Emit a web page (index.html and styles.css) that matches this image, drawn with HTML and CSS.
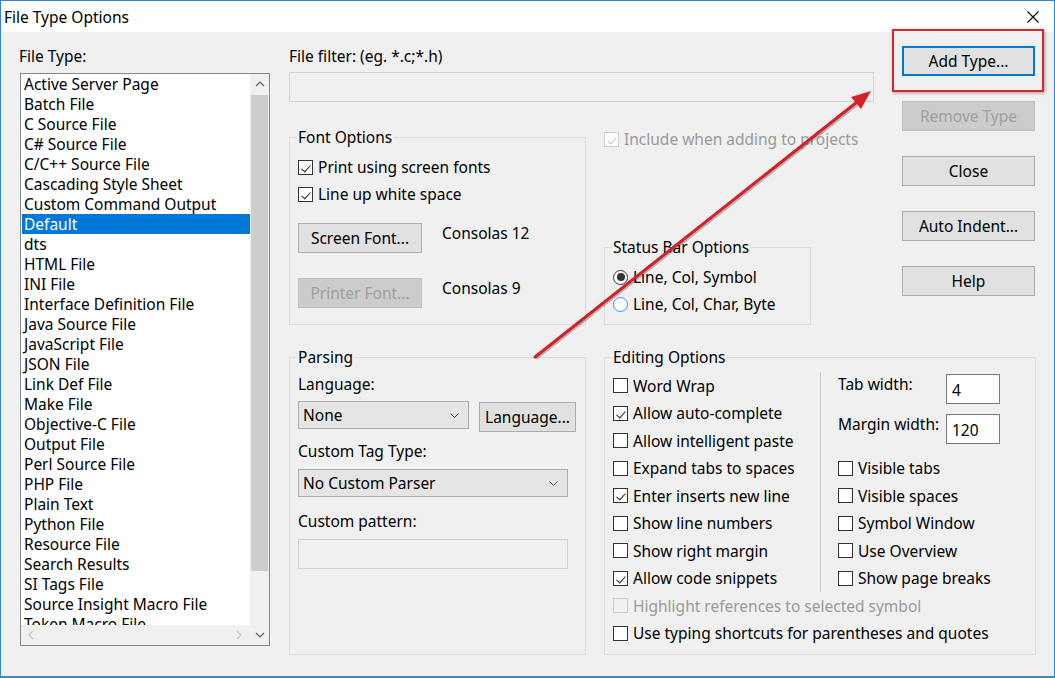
FILE: index.html
```html
<!DOCTYPE html>
<html>
<head>
<meta charset="utf-8">
<link rel="stylesheet" href="styles.css">
</head>
<body>
<div class="window">
  <div class="titlebar">
    <span class="title">File Type Options</span>
    <svg class="close-x" width="12" height="12" viewBox="0 0 12 12"><path d="M0.5 0.5L11.5 11.5M11.5 0.5L0.5 11.5" stroke="#000" stroke-width="1.1" fill="none"/></svg>
  </div>
  <div class="content">
    <div class="col-list">
      <div class="label">File Type:</div>
      <div class="listbox">
        <div class="items">
          <div class="item">Active Server Page</div>
          <div class="item">Batch File</div>
          <div class="item">C Source File</div>
          <div class="item">C# Source File</div>
          <div class="item">C/C++ Source File</div>
          <div class="item">Cascading Style Sheet</div>
          <div class="item">Custom Command Output</div>
          <div class="item selected">Default</div>
          <div class="item">dts</div>
          <div class="item">HTML File</div>
          <div class="item">INI File</div>
          <div class="item">Interface Definition File</div>
          <div class="item">Java Source File</div>
          <div class="item">JavaScript File</div>
          <div class="item">JSON File</div>
          <div class="item">Link Def File</div>
          <div class="item">Make File</div>
          <div class="item">Objective-C File</div>
          <div class="item">Output File</div>
          <div class="item">Perl Source File</div>
          <div class="item">PHP File</div>
          <div class="item">Plain Text</div>
          <div class="item">Python File</div>
          <div class="item">Resource File</div>
          <div class="item">Search Results</div>
          <div class="item">SI Tags File</div>
          <div class="item">Source Insight Macro File</div>
          <div class="item">Token Macro File</div>
        </div>
        <div class="vscroll">
          <div class="sb-btn">
            <svg width="10" height="6" viewBox="0 0 10 6"><path d="M1 5L5 1L9 5" stroke="#606060" stroke-width="1.2" fill="none"/></svg>
          </div>
          <div class="thumb"></div>
        </div>
        <div class="hscroll">
          <svg width="6" height="10" viewBox="0 0 6 10"><path d="M5 1L1 5L5 9" stroke="#c2c2c2" stroke-width="1.2" fill="none"/></svg>
          <svg width="6" height="10" viewBox="0 0 6 10"><path d="M1 1L5 5L1 9" stroke="#c2c2c2" stroke-width="1.2" fill="none"/></svg>
        </div>
        <div class="corner">
          <svg width="10" height="6" viewBox="0 0 10 6"><path d="M1 1L5 5L9 1" stroke="#606060" stroke-width="1.2" fill="none"/></svg>
        </div>
      </div>
    </div>

    <div class="main">
      <div class="top">
        <div class="top-left">
          <div class="label">File filter: (eg. *.c;*.h)</div>
          <div class="input filter"></div>
          <div class="top-groups">
            <fieldset class="group font-group">
              <legend>Font Options</legend>
              <div class="check-row"><span class="cb checked"></span>Print using screen fonts</div>
              <div class="check-row gap7"><span class="cb checked"></span>Line up white space</div>
              <div class="font-row first">
                <div class="btn font-btn">Screen Font...</div>
                <span class="font-name">Consolas 12</span>
              </div>
              <div class="font-row">
                <div class="btn font-btn disabled">Printer Font...</div>
                <span class="font-name">Consolas 9</span>
              </div>
            </fieldset>
            <div class="col3">
              <div class="check-row include disabled-text"><span class="cb checked disabled"></span>Include when adding to projects</div>
              <fieldset class="group status-group">
                <legend>Status Bar Options</legend>
                <div class="check-row"><span class="rb on"></span>Line, Col, Symbol</div>
                <div class="check-row gap7"><span class="rb focus"></span>Line, Col, Char, Byte</div>
              </fieldset>
            </div>
          </div>
        </div>
        <div class="buttons">
          <div class="btn default">Add Type...</div>
          <div class="btn disabled">Remove Type</div>
          <div class="btn">Close</div>
          <div class="btn">Auto Indent...</div>
          <div class="btn">Help</div>
        </div>
      </div>

      <div class="bottom">
        <fieldset class="group parsing-group">
          <legend>Parsing</legend>
          <div class="label">Language:</div>
          <div class="lang-row">
            <div class="combo lang-combo">None<svg width="9" height="5" viewBox="0 0 9 5"><path d="M0.5 0.5L4.5 4.5L8.5 0.5" stroke="#555" stroke-width="1" fill="none"/></svg></div>
            <div class="btn lang-btn">Language...</div>
          </div>
          <div class="label tag-label">Custom Tag Type:</div>
          <div class="combo wide-combo">No Custom Parser<svg width="9" height="5" viewBox="0 0 9 5"><path d="M0.5 0.5L4.5 4.5L8.5 0.5" stroke="#555" stroke-width="1" fill="none"/></svg></div>
          <div class="label pattern-label">Custom pattern:</div>
          <div class="input pattern"></div>
        </fieldset>

        <fieldset class="group editing-group">
          <legend>Editing Options</legend>
          <div class="edit-grid">
            <div class="erow r1 c1"><span class="cb"></span>Word Wrap</div>
            <div class="erow r2 c1"><span class="cb checked"></span>Allow auto-complete</div>
            <div class="erow r3 c1"><span class="cb"></span>Allow intelligent paste</div>
            <div class="erow r4 c1"><span class="cb"></span>Expand tabs to spaces</div>
            <div class="erow r5 c1"><span class="cb checked"></span>Enter inserts new line</div>
            <div class="erow r6 c1"><span class="cb"></span>Show line numbers</div>
            <div class="erow r7 c1"><span class="cb"></span>Show right margin</div>
            <div class="erow r8 c1"><span class="cb checked"></span>Allow code snippets</div>
            <div class="separator"></div>
            <div class="widths">
              <div class="width-row"><span class="width-label">Tab width:</span><div class="num-input">4</div></div>
              <div class="width-row second"><span class="width-label">Margin width:</span><div class="num-input">120</div></div>
            </div>
            <div class="erow r4 c3"><span class="cb"></span>Visible tabs</div>
            <div class="erow r5 c3"><span class="cb"></span>Visible spaces</div>
            <div class="erow r6 c3"><span class="cb"></span>Symbol Window</div>
            <div class="erow r7 c3"><span class="cb"></span>Use Overview</div>
            <div class="erow r8 c3"><span class="cb"></span>Show page breaks</div>
          </div>
          <div class="erow disabled-text"><span class="cb disabled"></span>Highlight references to selected symbol</div>
          <div class="erow"><span class="cb"></span>Use typing shortcuts for parentheses and quotes</div>
        </fieldset>
      </div>
    </div>
  </div>

  <div class="highlight-box"></div>
  <svg class="arrow" width="1055" height="678" viewBox="0 0 1055 678">
    <g transform="translate(1,1.5)" opacity="0.25">
      <line x1="535" y1="357" x2="856" y2="103" stroke="#000" stroke-width="3"/>
    </g>
    <line x1="535" y1="357" x2="857" y2="102" stroke="#d42029" stroke-width="3" stroke-linecap="round"/>
    <polygon points="871,91 861,109 851,97" fill="#d42029"/>
  </svg>
</div>
</body>
</html>
```

FILE: styles.css
```css
* { box-sizing: border-box; }

body {
  margin: 0;
  font-family: "Noto Sans", "Open Sans", sans-serif;
  font-size: 15.5px;
  color: #000;
  background: #f0f0f0;
}

.window {
  position: relative;
  width: 1055px;
  height: 678px;
  background: #f0f0f0;
  border: 1px solid #2e86cf;
  border-bottom: 2px solid #3a8fb5;
  overflow: hidden;
  display: flex;
  flex-direction: column;
}

.titlebar {
  height: 31px;
  flex: none;
  background: #fff;
  display: flex;
  align-items: center;
  justify-content: space-between;
  padding: 0 15px 0 3px;
}

.title { line-height: 20px; }

.content {
  display: flex;
  padding: 14px 0 0 19px;
}

.label { line-height: 20px; height: 20px; white-space: nowrap; }

/* ---------- list ---------- */
.col-list { width: 250px; flex: none; }
.col-list .label { margin-left: -1px; margin-bottom: 7px; }

.listbox {
  width: 250px;
  height: 573px;
  border: 1px solid #828790;
  background: #fff;
  display: grid;
  grid-template-columns: 1fr 19px;
  grid-template-rows: 1fr 20px;
  overflow: hidden;
}

.items { overflow: hidden; }
.item {
  height: 20px;
  line-height: 20px;
  padding-left: 3px;
  white-space: nowrap;
}
.item.selected { background: #0078d7; color: #fff; margin-left: 1px; padding-left: 2px; }

.vscroll {
  background: #f0f0f0;
  display: flex;
  flex-direction: column;
}
.sb-btn {
  height: 20px;
  flex: none;
  display: flex;
  align-items: center;
  justify-content: center;
}
.thumb {
  margin: 1px 1px 0 1px;
  height: 476px;
  background: #cdcdcd;
}

.hscroll {
  background: #f0f0f0;
  display: flex;
  align-items: center;
  justify-content: space-between;
  padding: 0 8px 0 7px;
}
.corner {
  background: #f0f0f0;
  display: flex;
  align-items: center;
  justify-content: center;
}

/* ---------- main ---------- */
.main { margin-left: 19px; display: flex; flex-direction: column; }

.top { display: flex; }
.top-left { width: 585px; display: flex; flex-direction: column; }

.input {
  border: 1px solid #d2d2d2;
  background: #f0f0f0;
}
.filter { margin-top: 6px; height: 30px; }

.top-groups { margin-top: 25px; display: flex; }

.group {
  margin: 0;
  border: 1px solid #dcdcdc;
  min-width: 0;
}
.group legend {
  padding: 0 1px;
  margin-left: -1px;
  line-height: 20px;
  height: 20px;
}

.font-group {
  width: 297px;
  padding: 10px 8px 16px 8px;
}

.check-row {
  display: flex;
  align-items: center;
  height: 20px;
  white-space: nowrap;
}
.gap7 { margin-top: 7px; }

.cb {
  width: 15px;
  height: 15px;
  flex: none;
  border: 1px solid #333;
  background: #fff;
  margin-right: 5px;
  position: relative;
}
.cb.checked::after {
  content: "";
  position: absolute;
  left: 2px;
  top: 1px;
  width: 8px;
  height: 4px;
  border-left: 1px solid #222;
  border-bottom: 1px solid #222;
  transform: translate(0.5px, 3px) rotate(-48deg);
  transform-origin: 50% 50%;
}
.cb.disabled { border-color: #cccccc; background: #f0f0f0; }
.cb.checked.disabled { background: #fff; }
.cb.checked.disabled::after { border-color: #c4c4c4; }

.disabled-text { color: #9a9a9a; }

.rb {
  width: 15px;
  height: 15px;
  flex: none;
  border-radius: 50%;
  border: 1px solid #333;
  background: #fff;
  margin-right: 5px;
  position: relative;
}
.rb.on::after {
  content: "";
  position: absolute;
  left: 2.5px;
  top: 2.5px;
  width: 8px;
  height: 8px;
  border-radius: 50%;
  background: #333;
}
.rb.focus { border-color: #3c92d8; }

.font-row { display: flex; align-items: flex-start; margin-top: 25px; }
.font-row.first { margin-top: 19px; }
.font-name { line-height: 20px; margin-left: 20px; white-space: nowrap; }

.btn {
  height: 30px;
  border: 1px solid #adadad;
  background: #e1e1e1;
  display: flex;
  align-items: center;
  justify-content: center;
  white-space: nowrap;
  line-height: 20px;
}
.btn.disabled { background: #cccccc; border-color: #bfbfbf; color: #a0a0a0; }
.btn.default { border: 2px solid #0078d7; }
.font-btn { width: 124px; }

.col3 { margin-left: 18px; width: 270px; display: flex; flex-direction: column; }
.include { margin-top: 2px; }
.status-group {
  margin-top: 88px;
  width: 207px;
  padding: 10px 8px 10px 8px;
}

.buttons {
  margin-left: 28px;
  width: 133px;
  display: flex;
  flex-direction: column;
  gap: 25px;
}

/* ---------- bottom ---------- */
.bottom { margin-top: 22px; display: flex; }

.parsing-group {
  width: 297px;
  height: 308px;
  padding: 7px 8px 0 8px;
}
.lang-row { display: flex; align-items: flex-start; margin-top: 7px; }
.combo {
  height: 28px;
  border: 1px solid #acacac;
  background: #e5e5e5;
  display: flex;
  align-items: center;
  justify-content: space-between;
  padding: 0 9px 0 4px;
  white-space: nowrap;
}
.lang-combo { width: 171px; }
.lang-btn { width: 97px; margin-left: 10px; margin-top: 1px; }
.tag-label { margin-top: 9px; }
.wide-combo { width: 270px; margin-top: 8px; }
.pattern-label { margin-top: 14px; }
.pattern { width: 270px; height: 30px; margin-top: 8px; }

.editing-group {
  margin-left: 18px;
  width: 432px;
  height: 308px;
  padding: 5px 8px 0 8px;
}

.edit-grid {
  display: grid;
  grid-template-columns: 207px 1px 17px 1fr;
  grid-template-rows: repeat(8, 27.5px);
}
.erow {
  height: 27.5px;
  display: flex;
  align-items: center;
  white-space: nowrap;
}
.c1 { grid-column: 1; }
.c3 { grid-column: 4; }
.r1 { grid-row: 1; } .r2 { grid-row: 2; } .r3 { grid-row: 3; } .r4 { grid-row: 4; }
.r5 { grid-row: 5; } .r6 { grid-row: 6; } .r7 { grid-row: 7; } .r8 { grid-row: 8; }

.separator { grid-column: 2; grid-row: 1 / 9; background: #cfcfcf; }

.widths { grid-column: 4; grid-row: 1 / 4; padding-top: 2px; }
.width-row { display: flex; align-items: flex-start; }
.width-row.second { margin-top: 10px; }
.width-label { width: 108px; line-height: 20px; white-space: nowrap; }
.num-input {
  width: 54px;
  height: 30px;
  border: 1px solid #7a7a7a;
  background: #fff;
  padding: 5px 0 0 5px;
  line-height: 20px;
}

/* ---------- overlays ---------- */
.highlight-box {
  position: absolute;
  left: 891px;
  top: 28px;
  width: 152px;
  height: 63px;
  border: 2px solid #d7242d;
  box-shadow: 1px 1px 3px rgba(0,0,0,0.35);
  pointer-events: none;
}
.arrow {
  position: absolute;
  left: -1px;
  top: -1px;
  pointer-events: none;
}
```
